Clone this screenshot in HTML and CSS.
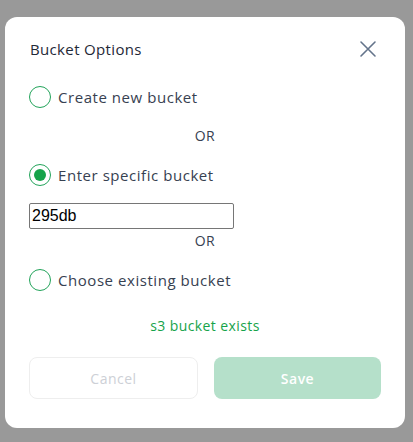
FILE: index.html
```html
<!DOCTYPE html>
<html>
<head>
<meta charset="utf-8">
<link rel="stylesheet" href="styles.css">
</head>
<body>
<div class="backdrop">
  <div class="modal">
    <div class="header">
      <h2 class="title">Bucket Options</h2>
      <button class="close" aria-label="Close">
        <svg width="24" height="24" viewBox="0 0 24 24"><path d="M4 5L18 19M18 5L4 19" stroke="#64748b" stroke-width="1.6" stroke-linecap="round" fill="none"/></svg>
      </button>
    </div>
    <label class="radio-row r1"><span class="radio"></span><span class="label">Create new bucket</span></label>
    <div class="or or1">OR</div>
    <label class="radio-row r2"><span class="radio checked"></span><span class="label">Enter specific bucket</span></label>
    <input class="bucket-input" type="text" value="295db">
    <div class="or or2">OR</div>
    <label class="radio-row r3"><span class="radio"></span><span class="label">Choose existing bucket</span></label>
    <div class="status">s3 bucket exists</div>
    <div class="actions">
      <button class="btn cancel">Cancel</button>
      <button class="btn save">Save</button>
    </div>
  </div>
</div>
</body>
</html>
```
FILE: styles.css
```css
* { box-sizing: border-box; }
html, body { margin: 0; padding: 0; }
body {
  background: #999999;
  font-family: "Open Sans", "Noto Sans", sans-serif;
  width: 413px;
  height: 442px;
  overflow: hidden;
}
.backdrop {
  padding: 17px 8px 0 5px;
}
.modal {
  width: 400px;
  height: 411px;
  background: #ffffff;
  border-radius: 12px;
  padding: 19px 24px 29px 24px;
  display: flex;
  flex-direction: column;
  letter-spacing: 0.55px;
}
.header {
  height: 24px;
  display: flex;
  align-items: center;
  justify-content: space-between;
  margin-top: 1px;
}
.title {
  margin: 0 0 0 1px;
  font-size: 15px;
  font-weight: 500;
  color: #1f2937;
  letter-spacing: 0.35px;
}
.close {
  width: 24px;
  height: 24px;
  padding: 0;
  border: 0;
  background: none;
  display: flex;
}
.radio-row {
  display: flex;
  align-items: center;
  height: 22px;
  gap: 7px;
}
.r1 { margin-top: 25px; }
.r2 { margin-top: 18px; }
.r3 { margin-top: 18px; }
.radio {
  width: 22px;
  height: 22px;
  border: 1.5px solid #22a35a;
  border-radius: 50%;
  display: flex;
  align-items: center;
  justify-content: center;
  flex: none;
}
.radio.checked::after {
  content: "";
  width: 12px;
  height: 12px;
  border-radius: 50%;
  background: #16a34a;
}
.label {
  font-size: 15px;
  color: #374151;
}
.or {
  text-align: center;
  font-size: 14px;
  line-height: 20px;
  color: #374151;
}
.or1 { margin-top: 18px; }
.or2 { margin-top: 2px; }
.bucket-input {
  margin-top: 17px;
  width: 205px;
  height: 26px;
  border: 1px solid #767676;
  border-radius: 2px;
  padding: 1px 2px;
  font-family: "Liberation Sans", Arial, sans-serif;
  font-size: 16px;
  letter-spacing: 0;
  color: #000;
}
.status {
  margin-top: 25px;
  text-align: center;
  font-size: 14px;
  line-height: 20px;
  color: #16a34a;
  letter-spacing: 0.4px;
}
.actions {
  margin-top: 21px;
  display: flex;
  gap: 16px;
}
.btn {
  flex: 1;
  height: 42px;
  border-radius: 8px;
  font-family: inherit;
  font-size: 14px;
  letter-spacing: 0.5px;
}
.cancel {
  background: #fff;
  border: 1px solid #eeeeee;
  color: #cdd0d6;
}
.save {
  background: #b5e0ca;
  border: 0;
  color: #fff;
  font-weight: 600;
}
```
